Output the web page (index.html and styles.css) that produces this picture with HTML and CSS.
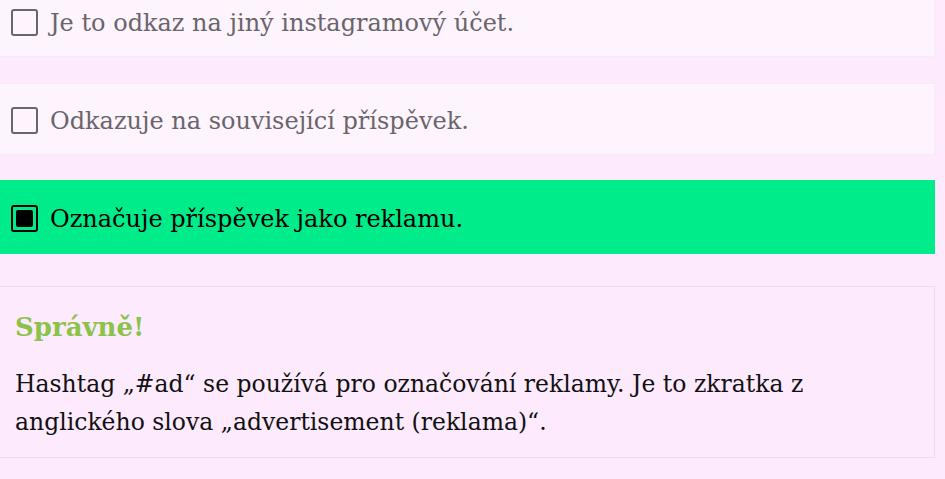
FILE: index.html
```html
<!DOCTYPE html>
<html lang="cs">

<head>
    <meta charset="UTF-8">
    <meta name="viewport" content="width=device-width, initial-scale=1.0">
    <title>Kvíz</title>
    <link rel="stylesheet" href="styles.css">
</head>

<body>
    <div class="quiz">
        <div class="answers">
            <label class="answer">
                <span class="box"></span>
                <span class="txt">Je to odkaz na jiný instagramový účet.</span>
            </label>
            <label class="answer">
                <span class="box"></span>
                <span class="txt">Odkazuje na související příspěvek.</span>
            </label>
            <label class="answer correct">
                <span class="box"></span>
                <span class="txt">Označuje příspěvek jako reklamu.</span>
            </label>
        </div>
        <div class="feedback">
            <h3>Správně!</h3>
            <p>Hashtag „#ad“ se používá pro označování reklamy. Je to zkratka z anglického slova „advertisement (reklama)“.</p>
        </div>
    </div>
</body>

</html>
```
FILE: styles.css
```css
body {
    margin: 0;
    background: #fdeafd;
    overflow: hidden;
    font-family: "DejaVu Serif", "Liberation Serif", serif;
}

.quiz {
    margin-top: -15px;
    margin-left: -1px;
    width: 936px;
}

.answers {
    display: flex;
    flex-direction: column;
}

.answer {
    display: flex;
    align-items: center;
    gap: 12px;
    height: 72px;
    box-sizing: border-box;
    padding: 3px 11px 0;
    margin-bottom: 25px;
    background: #fef4fe;
    border: 1px solid #f5ebf5;
    color: #6a656b;
    font-size: 24px;
    cursor: pointer;
}

.answer:first-child {
    margin-bottom: 26px;
}

.box {
    flex: none;
    width: 27px;
    height: 27px;
    box-sizing: border-box;
    border: 2px solid #6a656b;
    border-radius: 3px;
    position: relative;
}

.answer.correct {
    background: #00ec8a;
    border-color: #00ec8a;
    color: #000;
    height: 74px;
    margin-bottom: 0;
}

.correct .box {
    border-color: #000;
}

.correct .box:after {
    content: "";
    position: absolute;
    top: 3px;
    left: 3px;
    right: 3px;
    bottom: 3px;
    background: #000;
    border-radius: 2px;
}

.feedback {
    margin-top: 32px;
    border: 1px solid #e6dfe6;
    padding: 25px 15px 18px;
    height: 172px;
    box-sizing: border-box;
}

.feedback h3 {
    margin: 0 0 23px;
    color: #8bc34a;
    font-size: 26px;
    line-height: 30px;
}

.feedback p {
    margin: 0;
    font-size: 23.5px;
    line-height: 38px;
    color: #111;
}
```
